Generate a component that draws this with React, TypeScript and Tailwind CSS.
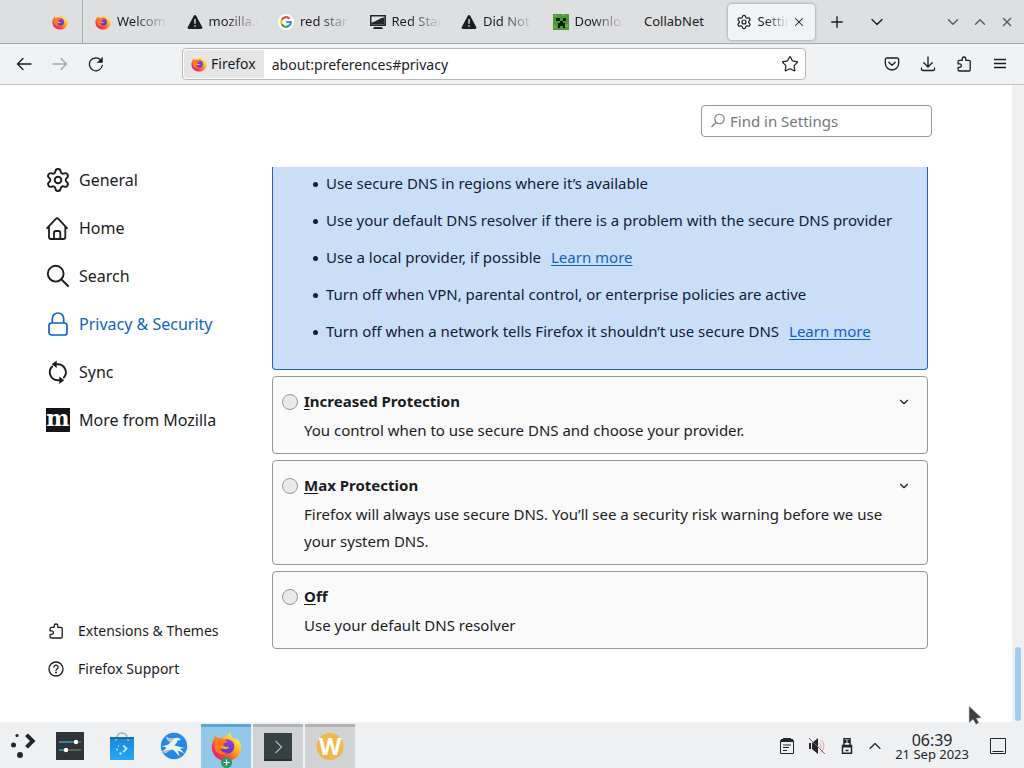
import React, { useState } from 'react';
import { ChevronDown, ChevronUp, Plus, Settings, Star, X } from 'lucide-react';

type IconProps = { className?: string };

function FirefoxLogo({ className = 'size-4' }: IconProps) {
  return (
    <svg className={className} viewBox="0 0 32 32" fill="none">
      <defs>
        <linearGradient id="ff-body" x1="27" y1="4" x2="5" y2="29" gradientUnits="userSpaceOnUse">
          <stop offset="0.05" stopColor="#fff44f" />
          <stop offset="0.3" stopColor="#ffc02c" />
          <stop offset="0.5" stopColor="#ff8a1e" />
          <stop offset="0.75" stopColor="#ff3b47" />
          <stop offset="1" stopColor="#e5197b" />
        </linearGradient>
        <linearGradient id="ff-globe" x1="20" y1="8" x2="13" y2="23" gradientUnits="userSpaceOnUse">
          <stop stopColor="#a33be0" />
          <stop offset="1" stopColor="#4a3fc4" />
        </linearGradient>
      </defs>
      <path
        d="M20.2 1c-.3 2.600.9 4.300 2.400 5.900 1 .6 2.700 1.700 3.600 3.100.1-.9-.1-1.900-.5-2.700 3.700 2.500 5.500 6.400 5.500 10.100C31.200 25 24.500 31.200 16 31.200 7.600 31.200.8 24.800.8 16.500c0-3.900 1.200-6.700 3.100-9.200L4 4.300c1.300.7 2.200 1.700 2.900 3 1.300-.5 3-.5 4.300-.1 1-.9 2.300-1.600 3.800-1.900 1.700-.7 3.700-2.200 5.200-4.300z"
        fill="url(#ff-body)"
      />
      <circle cx="16.500" cy="16" r="7.600" fill="url(#ff-globe)" />
      <path d="M4.200 8.500c3-2 7-1.400 9.500.7 1.500.2 2.900.7 3.300 1.500-.5 1.200-2.400 1.600-3.900 2-.7 1.500.3 2.700 1.500 3.200-1.100 2.700-3.800 3-5.100 1.600.6 3.400 4.200 5.700 7.600 4.700-5 4-12.200 1.400-13.500-5.200z" fill="#ff7a22" />
      <path d="M13.600 16.200c1.500 1 3.400-.5 5 .5-1.200 1.700-3.200 2.500-5.300 1.700-1.700-.5-3.400-.8-3.800-2.300 1.200.8 2.800.8 4.100.1z" fill="#ffb32e" />
    </svg>
  );
}

function WarningIcon({ className = 'size-4' }: IconProps) {
  return (
    <svg className={className} viewBox="0 0 16 16">
      <path d="M8 1c-.5 0-.9.300-1.200.8L.8 13c-.5 1 .1 2 1.200 2h12c1.100 0 1.700-1 1.200-2l-6-11.200C8.900 1.300 8.500 1 8 1z" fill="#1b1e20" />
      <path d="M8 5v4.700M8 11.300v1.500" stroke="#e0e1e2" strokeWidth="1.400" />
    </svg>
  );
}

function GoogleIcon() {
  return (
    <svg className="size-4" viewBox="0 0 16 16" fill="none" strokeWidth="2.200">
      <circle cx="8" cy="8" r="8" fill="#fff" />
      <path d="M11.500 4.700A4.800 4.800 0 0 0 3.800 5.700" stroke="#ea4335" />
      <path d="M3.800 5.700a4.800 4.800 0 0 0 0 4.600" stroke="#fbbc05" />
      <path d="M3.800 10.300a4.800 4.800 0 0 0 7.300 1.400" stroke="#34a853" />
      <path d="M11.100 11.700A4.800 4.800 0 0 0 12.800 8H8.200" stroke="#4285f4" />
    </svg>
  );
}

function MonitorIcon() {
  return (
    <svg className="size-4" viewBox="0 0 16 16">
      <path d="M0 1h16v11H0z M4 13h8l1 2H3z" fill="#24282a" />
      <path d="M1.500 2.500h13v8h-13z" fill="#e0e1e2" />
      <path d="M14.500 3.500C9 4 7.500 7.500 1.500 8.500v2h13z" fill="#24282a" />
    </svg>
  );
}

function CreeperIcon() {
  return (
    <svg className="size-4" viewBox="0 0 16 16" shapeRendering="crispEdges">
      <path d="M0 0h16v16H0z" fill="#4c9a35" />
      <path d="M1 1h3v2H1zM9 0h3v2H9zM12 10h3v3h-3zM1 11h2v3H1z" fill="#62b246" />
      <path d="M3 4h4v3H3zM10 4h3v3h-3zM7 7h3v2H7zM5 9h7v3H5zM5 12h2v2H5zM10 12h2v2h-2z" fill="#0d1a0a" />
    </svg>
  );
}

function ArrowIcon({ className = '' }: IconProps) {
  return (
    <svg className={`size-4 ${className}`} viewBox="0 0 16 16" fill="none" stroke="currentColor" strokeWidth="1.300" strokeLinecap="round" strokeLinejoin="round">
      <path d="M15 8H1.500M7 2.500L1.500 8 7 13.500" />
    </svg>
  );
}

function ReloadIcon() {
  return (
    <svg className="size-4" viewBox="0 0 16 16" fill="none" stroke="currentColor" strokeWidth="1.300" strokeLinecap="round">
      <path d="M12.800 4A6.500 6.500 0 1 0 14.300 9.500" />
      <path d="M14.500 1.500v5h-5z" fill="currentColor" strokeWidth="0.600" strokeLinejoin="round" />
    </svg>
  );
}

function PocketIcon() {
  return (
    <svg className="size-4" viewBox="0 0 16 16" fill="none" stroke="currentColor" strokeWidth="1.300" strokeLinecap="round" strokeLinejoin="round">
      <path d="M3 2h10a1.700 1.700 0 0 1 1.700 1.700v3.600a6.700 6.700 0 0 1-13.400 0V3.700A1.700 1.700 0 0 1 3 2z" />
      <path d="M4.800 6.300L8 9.300l3.200-3" />
    </svg>
  );
}

function DownloadIcon() {
  return (
    <svg className="size-4" viewBox="0 0 16 16" fill="none" stroke="currentColor" strokeWidth="1.300" strokeLinecap="round" strokeLinejoin="round">
      <path d="M8 .8v10M3.800 6.800L8 11l4.200-4.200M1.500 12v1.200c0 .8.600 1.300 1.300 1.300h10.400c.7 0 1.300-.5 1.300-1.300V12" />
    </svg>
  );
}

function PuzzleIcon() {
  return (
    <svg className="size-4" viewBox="0 0 16 16" fill="none" stroke="currentColor" strokeWidth="1.300" strokeLinejoin="round">
      <path d="M3.300 4.300h2.900V2.800a1.800 1.800 0 0 1 3.600 0v1.500H13c.7 0 1.200.5 1.200 1.200v8.300c0 .7-.5 1.200-1.200 1.200H3.300c-.7 0-1.200-.5-1.200-1.200v-2.500h1.600a1.700 1.700 0 0 0 0-3.400H2.100V5.500c0-.7.500-1.200 1.200-1.200z" />
    </svg>
  );
}

function HomeIcon() {
  return (
    <svg className="size-6" viewBox="0 0 24 24" fill="none" stroke="currentColor" strokeWidth="1.800" strokeLinecap="round" strokeLinejoin="round">
      <path d="M1.200 12.200L9.800 2.800a1.800 1.800 0 0 1 2.600 0l8.600 9.400M3 10.500V21a2 2 0 0 0 2 2h12.300a2 2 0 0 0 2-2V10.500" />
      <path d="M8 23v-6a2 2 0 0 1 2-2h2.300a2 2 0 0 1 2 2v6" />
    </svg>
  );
}

function SearchIcon() {
  return (
    <svg className="size-6" viewBox="0 0 24 24" fill="none" stroke="currentColor" strokeWidth="1.900" strokeLinecap="round">
      <circle cx="9.700" cy="9.700" r="7.900" />
      <path d="M15.500 15.500l6.500 6.500" />
    </svg>
  );
}

function LockIcon() {
  return (
    <svg className="size-6" viewBox="0 0 24 24" fill="none" stroke="currentColor" strokeWidth="1.700">
      <rect x="3" y="11" width="18" height="12" rx="2.500" />
      <path d="M6.300 11V6.700a5.700 5.700 0 0 1 11.400 0V11" />
    </svg>
  );
}

function SyncIcon() {
  return (
    <svg className="size-6" viewBox="0 0 24 24" fill="none" stroke="currentColor" strokeWidth="1.900" strokeLinecap="round">
      <path d="M9.500 4.300H12a8 8 0 0 1 5.800 13.300M14.500 20.200H12A8 8 0 0 1 6.200 6.500" />
      <path d="M10.700.5v7.600L5.800 4.300zM13.300 24v-7.600l4.900 3.800z" fill="currentColor" stroke="none" />
    </svg>
  );
}

function MozillaIcon() {
  return (
    <svg className="size-6" viewBox="0 0 24 24">
      <path d="M0 0h24v24H0z" fill="#15141a" />
      <text x="12" y="18" textAnchor="middle" fontFamily="'DejaVu Serif', serif" fontWeight="700" fontSize="22" fill="#fff">m</text>
    </svg>
  );
}

function HelpIcon() {
  return (
    <svg className="size-4" viewBox="0 0 16 16" fill="none" stroke="currentColor" strokeWidth="1.300" strokeLinecap="round">
      <circle cx="8" cy="8" r="7" />
      <path d="M5.900 6.200a2.100 2.100 0 1 1 3.100 1.800c-.6.400-1 .7-1 1.300" />
      <circle cx="8" cy="11.500" r="0.300" fill="currentColor" />
    </svg>
  );
}

const tabs = [
  { title: 'Welcome', icon: <FirefoxLogo /> },
  { title: 'mozilla.org', icon: <WarningIcon /> },
  { title: 'red star os', icon: <GoogleIcon /> },
  { title: 'Red Star OS', icon: <MonitorIcon /> },
  { title: 'Did Not Connect', icon: <WarningIcon /> },
  { title: 'Download', icon: <CreeperIcon /> },
  { title: 'CollabNet', icon: null },
];

function TabBar() {
  return (
    <div className="flex h-11 shrink-0 items-center border-b border-[#a3a4a6] bg-[#dedfe1] text-[13px]">
      <button aria-label="Pinned tab" className="flex h-full w-[83px] shrink-0 items-center justify-end border-r border-[#a9aaac] pr-[14px] pt-px">
        <FirefoxLogo />
      </button>
      <div className="flex h-full min-w-0 flex-1 items-center gap-1 pl-1 pt-px">
        {tabs.map((tab) => (
          <button key={tab.title} className="flex h-9 min-w-0 flex-1 items-center gap-[6px] px-2 text-left">
            {tab.icon && <span className="shrink-0">{tab.icon}</span>}
            <span
              className={
                tab.icon
                  ? 'min-w-0 flex-1 overflow-hidden whitespace-nowrap [mask-image:linear-gradient(to_left,transparent,black_32px)]'
                  : 'min-w-0 flex-1 overflow-hidden whitespace-nowrap'
              }
            >
              {tab.title}
            </span>
          </button>
        ))}
        <div className="flex h-9 min-w-0 flex-1 items-center gap-[6px] rounded bg-[#f2f3f4] pl-2 pr-2 shadow-[0_0_3px_rgba(0,0,0,0.4)]">
          <Settings className="size-4 shrink-0" strokeWidth={1.8} />
          <button className="min-w-0 flex-1 overflow-hidden whitespace-nowrap text-left [mask-image:linear-gradient(to_left,transparent,black_24px)]">
            Settings
          </button>
          <button aria-label="Close tab" className="-ml-1 flex size-4 shrink-0 items-center justify-center">
            <X className="size-[14px]" strokeWidth={1.8} />
          </button>
        </div>
      </div>
      <div className="flex w-[209px] shrink-0 items-center pt-px">
        <button aria-label="New tab" className="flex w-11 items-center justify-center">
          <Plus className="size-[18px]" strokeWidth={1.8} />
        </button>
        <button aria-label="List all tabs" className="flex w-9 items-center justify-center">
          <ChevronDown className="size-5" strokeWidth={1.6} />
        </button>
        <div className="flex flex-1 justify-end gap-[7px] pr-[7px] text-[#5a5e61]">
          <button aria-label="Minimize" className="flex w-5 items-center justify-center"><ChevronDown className="size-[18px]" strokeWidth={2} /></button>
          <button aria-label="Maximize" className="flex w-5 items-center justify-center"><ChevronUp className="size-[18px]" strokeWidth={2} /></button>
          <button aria-label="Close window" className="flex w-5 items-center justify-center"><X className="size-[14px]" strokeWidth={2.400} /></button>
        </div>
      </div>
    </div>
  );
}

function Toolbar() {
  return (
    <div className="flex h-[41px] shrink-0 items-center border-b border-[#c3c4c5] bg-[#f1f2f3] pl-4 text-sm">
      <button aria-label="Back"><ArrowIcon /></button>
      <button aria-label="Forward" className="ml-5 text-[#a5a6a8]"><ArrowIcon className="rotate-180" /></button>
      <button aria-label="Reload" className="ml-5"><ReloadIcon /></button>
      <div className="ml-[78px] flex h-8 min-w-0 flex-1 items-center rounded border border-[#b9babc] bg-white p-px">
        <span className="flex h-full shrink-0 items-center gap-1 rounded-l bg-[#e5e5e6] pl-[7px] pr-2">
          <FirefoxLogo />
          <span className="whitespace-nowrap">Firefox</span>
        </span>
        <input
          aria-label="Address"
          defaultValue="about:preferences#privacy"
          className="h-full min-w-0 flex-1 bg-transparent pl-2 outline-none"
        />
        <button aria-label="Bookmark this page" className="mr-[5px]">
          <Star className="size-[18px]" strokeWidth={1.6} />
        </button>
      </div>
      <div className="ml-[78px] mr-4 flex shrink-0 gap-5">
        <button aria-label="Save to Pocket"><PocketIcon /></button>
        <button aria-label="Downloads"><DownloadIcon /></button>
        <button aria-label="Extensions"><PuzzleIcon /></button>
        <button aria-label="Menu">
          <svg className="size-4" viewBox="0 0 16 16" stroke="currentColor" strokeWidth="1.300">
            <path d="M2 3.500h12M2 7.500h12M2 11.500h12" />
          </svg>
        </button>
      </div>
    </div>
  );
}

const categories = [
  { name: 'General', icon: <Settings className="size-6 scale-110" strokeWidth={1.7} /> },
  { name: 'Home', icon: <HomeIcon /> },
  { name: 'Search', icon: <SearchIcon /> },
  { name: 'Privacy & Security', icon: <LockIcon /> },
  { name: 'Sync', icon: <SyncIcon /> },
  { name: 'More from Mozilla', icon: <MozillaIcon /> },
];

function Sidebar() {
  const [selected, setSelected] = useState('Privacy & Security');

  return (
    <nav className="flex w-[272px] shrink-0 flex-col pb-[34px] pl-[46px] pt-[71px]">
      {categories.map((c) => (
        <button
          key={c.name}
          onClick={() => setSelected(c.name)}
          className={`flex h-12 items-center gap-[9px] text-left text-base ${c.name === selected ? 'text-[#0f62c9]' : ''}`}
        >
          {c.icon}
          {c.name}
        </button>
      ))}
      <div className="mt-auto text-sm">
        <a href="#addons" className="flex h-[38px] items-center gap-[14px] pl-[2px]">
          <PuzzleIcon />
          Extensions &amp; Themes
        </a>
        <a href="#support" className="flex h-[38px] items-center gap-[14px] pl-[2px]">
          <HelpIcon />
          Firefox Support
        </a>
      </div>
    </nav>
  );
}

const defaultPoints = [
  { text: 'Use secure DNS in regions where it’s available' },
  { text: 'Use your default DNS resolver if there is a problem with the secure DNS provider' },
  { text: 'Use a local provider, if possible', link: true },
  { text: 'Turn off when VPN, parental control, or enterprise policies are active' },
  { text: 'Turn off when a network tells Firefox it shouldn’t use secure DNS', link: true },
];

const options = [
  { id: 'increased', title: 'Increased Protection', text: 'You control when to use secure DNS and choose your provider.', expandable: true },
  { id: 'max', title: 'Max Protection', text: 'Firefox will always use secure DNS. You’ll see a security risk warning before we use your system DNS.', expandable: true },
  { id: 'off', title: 'Off', text: 'Use your default DNS resolver', expandable: false },
];

function DnsSettings() {
  return (
    <div className="mt-[30px] flex flex-col gap-[6px] pr-1 text-[15px] leading-[27px]">
      <div className="rounded-b border border-t-0 border-[#1f62b5] bg-[#cbdef7] pb-6 pl-10 pr-6 pt-[3px] text-[#10203a]">
        <ul className="flex flex-col gap-[10px]">
          {defaultPoints.map((p) => (
            <li key={p.text} className="before:mr-2 before:inline-block before:size-[5px] before:rounded-full before:bg-[#10203a] before:align-middle before:content-['']">
              {p.text}
              {p.link && (
                <a href="#learn-more" className="ml-[10px] text-[#0f62c9] underline underline-offset-2">
                  Learn more
                </a>
              )}
            </li>
          ))}
        </ul>
      </div>
      {options.map((o) => (
        <div key={o.id} className="rounded border border-[#97989b] bg-[#fafafa] pb-[9px] pl-[9px] pr-4 pt-[11px]">
          <div className="flex items-center">
            <input
              type="radio"
              name="doh"
              id={o.id}
              className="mr-[6px] size-4 shrink-0 appearance-none rounded-full border border-[#97989b] bg-[#e9e9ea]"
            />
            <label htmlFor={o.id} className="flex-1 font-bold">
              <span className="underline underline-offset-2">{o.title[0]}</span>
              {o.title.slice(1)}
            </label>
            {o.expandable && (
              <button aria-label={`Show ${o.title} details`}>
                <ChevronDown className="size-[14px]" strokeWidth={2} />
              </button>
            )}
          </div>
          <p className="mt-[2px] pl-[22px] pr-5">{o.text}</p>
        </div>
      ))}
    </div>
  );
}

function Preferences() {
  return (
    <div className="relative flex min-h-0 flex-1 bg-white">
      <Sidebar />
      <main className="min-w-0 flex-1 overflow-hidden pt-5">
        <div className="max-w-[660px]">
          <label className="ml-auto flex h-8 w-[231px] items-center gap-1 rounded border border-[#97989b] bg-white px-2 text-[#77777c]">
            <svg className="size-4" viewBox="0 0 16 16" fill="none" stroke="currentColor" strokeWidth="1.100">
              <circle cx="9.500" cy="6" r="4.700" />
              <path d="M6.200 9.300L1.500 14" />
            </svg>
            <input
              aria-label="Find in Settings"
              placeholder="Find in Settings"
              className="min-w-0 flex-1 bg-transparent text-[15px] outline-none placeholder:text-[#77777c]"
            />
          </label>
          <DnsSettings />
        </div>
      </main>
      <div className="flex w-3 shrink-0 flex-col justify-end bg-[#eff0f1] px-[3px] pb-px">
        <div className="h-[74px] rounded-full bg-[#a0cdee]" />
      </div>
      {/* Mouse pointer */}
      <svg className="absolute bottom-[-3px] right-[42px] h-5 w-[14px]" viewBox="0 0 14 20">
        <path d="M1 1v17l4-3.500 3 5 3-1.800-2.500-4.200 5-.8z" fill="#3d3f42" stroke="#d5d6d8" strokeWidth="0.600" />
      </svg>
    </div>
  );
}

function Taskbar() {
  return (
    <footer className="flex h-[46px] shrink-0 items-stretch bg-[#eff0f1]">
      <button aria-label="Application launcher" className="flex w-[43px] items-center justify-center">
        <svg className="size-7" viewBox="0 0 28 28" fill="#232629">
          <circle cx="9" cy="4.500" r="1.600" />
          <circle cx="5.500" cy="14" r="2.500" />
          <circle cx="12" cy="24" r="3" />
          <path d="M17 5l3-2.500 7.500 7.500-7.500 7.500-3-2.500 5-5z" />
        </svg>
      </button>
      <div className="ml-[2px] flex gap-[2px]">
        <button aria-label="System Settings" className="flex w-[50px] items-center justify-center pt-[2px]">
          <svg className="size-7" viewBox="0 0 28 28" fill="none" strokeWidth="1.700">
            <path d="M0 0h28v28H0z" fill="#2e3437" />
            <path d="M3 10h17M3 18h6" stroke="#3f9ac4" />
            <path d="M20 10h5M10 18h15" stroke="#666c70" />
            <circle cx="20" cy="10" r="2.200" fill="#fff" />
            <circle cx="10" cy="18" r="2.200" fill="#fff" />
          </svg>
        </button>
        <button aria-label="Discover" className="flex w-[50px] items-center justify-center pt-[2px]">
          <svg className="size-7" viewBox="0 0 28 28">
            <defs>
              <linearGradient id="bag" x1="0" y1="0" x2="0" y2="1">
                <stop stopColor="#1587dc" />
                <stop offset="1" stopColor="#2ba5f5" />
              </linearGradient>
            </defs>
            <path d="M9 8V5.500a5 4.500 0 0 1 10 0V8" fill="none" stroke="#8fb7bd" strokeWidth="1.600" />
            <path d="M2 5h24v23H2z" fill="url(#bag)" />
            <path d="M2 5h24v2H2z" fill="#23699c" />
            <g fill="#bfe9ff">
              <circle cx="10.500" cy="14" r="0.700" />
              <circle cx="9" cy="17.500" r="1" />
              <circle cx="12.500" cy="21.500" r="1.200" />
              <path d="M14.500 14l1.300-1.300 4 4-4 4-1.300-1.300 2.700-2.700z" />
              <circle cx="8" cy="8" r="0.800" />
              <circle cx="20" cy="8" r="0.800" />
            </g>
          </svg>
        </button>
        <button aria-label="Falkon" className="flex w-[50px] items-center justify-center pt-[2px]">
          <svg className="size-7" viewBox="0 0 28 28">
            <circle cx="14" cy="14" r="13.200" fill="#2389e4" />
            <path d="M6 4.500c3 2.500 6 2.500 9 1.500 3-.8 5 0 6 2l-3.500.5c-.5 2-1.500 3.500-3 5l4 1 6.500 1.500-5 .5 4.500 5-6.500-3 1.500 6-6-6.500c-3 0-5 .5-7.500 3l-5-1.500c2.500-.5 4-2 5.500-4l-5-1.500c4 0 7.500-1.500 9-4C8.500 9.500 6.500 7.500 6 4.500z" fill="#eff3f6" />
            <path d="M6 4.500c3 2.500 6 2.500 9 1.500-1 1.500-2.500 2-4.500 2 1 .8 2 1 3.500 1l-3.500 1C8.500 9.500 6.500 7.500 6 4.500zM13.500 18c-3 0-5 .5-7.500 3l-5-1.500c5-.5 7-3 12.500-1.500z" fill="#b3c0cb" />
          </svg>
        </button>
        <button aria-label="Firefox" className="relative mt-[2px] flex w-[50px] items-center justify-center border-t-[3px] border-[#59a5d2] bg-[#92c9ea] pb-[2px]">
          <FirefoxLogo className="size-[31px]" />
          <svg className="absolute bottom-0 left-5 size-[11px]" viewBox="0 0 11 11">
            <circle cx="5.500" cy="5.500" r="5.500" fill="#2a9a62" />
            <path d="M5.500 2.500v6M2.500 5.500h6" stroke="#fff" strokeWidth="1.200" />
          </svg>
        </button>
        <button aria-label="Konsole" className="mt-[2px] flex w-[50px] items-center justify-center border-t-[3px] border-[#b1b2b4] bg-[#d1d2d4] pb-[2px]">
          <svg className="size-7" viewBox="0 0 28 28">
            <path d="M0 0h28v28H0z" fill="#364144" />
            <path d="M0 26h28v2H0z" fill="#293134" />
            <path d="M11.500 8l6 6-6 6" fill="none" stroke="#a9b3b5" strokeWidth="1.300" />
          </svg>
        </button>
        <button aria-label="Wayland session" className="mt-[2px] flex w-[50px] items-center justify-center border-t-[3px] border-[#b1b2b4] bg-[#d1d2d4] pb-[2px]">
          <svg className="size-7" viewBox="0 0 28 28">
            <circle cx="14" cy="13.500" r="13.500" fill="#f2b548" />
            <text x="14" y="22" textAnchor="middle" fontFamily="'Open Sans', sans-serif" fontWeight="700" fontSize="23" fill="#fff">W</text>
          </svg>
        </button>
      </div>
      <div className="ml-auto flex items-center gap-[14px] pr-[17px] pt-[2px] text-[#232629]">
        <button aria-label="Clipboard">
          <svg className="size-4" viewBox="0 0 16 16" fill="none" stroke="currentColor">
            <path d="M1.500 2.500h13v13h-13z" />
            <path d="M4 0h8v1h2v3H2V1h2z" fill="currentColor" stroke="none" />
            <path d="M4 7h8M4 9.500h6M4 12.500h4" />
          </svg>
        </button>
        <button aria-label="Volume muted">
          <svg className="size-4" viewBox="0 0 16 16" fill="none">
            <path d="M0 5h2v6H0zM3 5l6-5v16l-6-5z" fill="#232629" />
            <path d="M10.500 5a4 4 0 0 1 0 6M11.500 2a7 7 0 0 1 0 12" stroke="#d4a3aa" />
            <path d="M0 0l16 16" stroke="#8e6268" />
          </svg>
        </button>
        <button aria-label="Removable devices">
          <svg className="size-4" viewBox="0 0 16 16" fill="none" stroke="currentColor" strokeWidth="1.500">
            <path d="M5 7V.8h6V7" />
            <path d="M5 2h2.500v3H5zM8.500 2H11v3H8.500zM4 7h8v2.500H4z" fill="currentColor" stroke="none" />
            <path d="M3.500 7.500h9v7.700h-9zM6.500 12.500h3" />
          </svg>
        </button>
        <button aria-label="Show hidden icons" className="-ml-1 -mr-1">
          <ChevronUp className="size-5" strokeWidth={1.400} />
        </button>
        <button className="flex flex-col items-center">
          <span className="text-base leading-4">06:39</span>
          <span className="text-[13px] leading-3">21 Sep 2023</span>
        </button>
        <button aria-label="Show desktop" className="ml-[6px]">
          <svg className="size-[18px]" viewBox="0 0 18 18" fill="none" stroke="currentColor">
            <path d="M1.500 1.500h15v15h-15zM3.500 14.500h11" />
          </svg>
        </button>
      </div>
    </footer>
  );
}

export default function App() {
  return (
    <div className="flex h-screen flex-col overflow-hidden font-['Noto_Sans',sans-serif] text-[#1b1c1f]">
      <TabBar />
      <Toolbar />
      <Preferences />
      <Taskbar />
    </div>
  );
}
